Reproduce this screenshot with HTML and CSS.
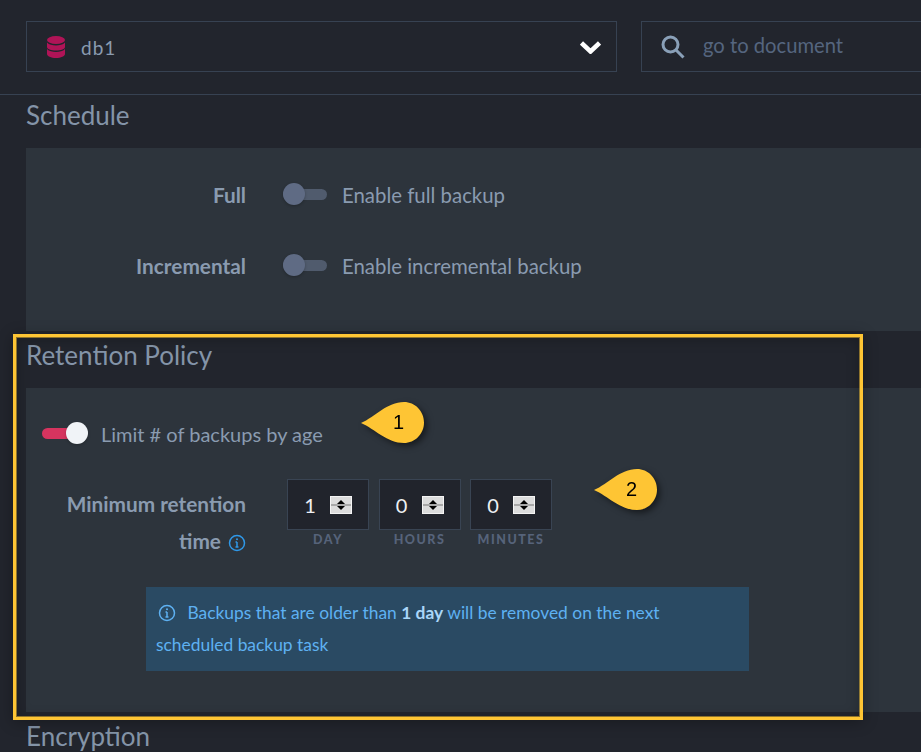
FILE: index.html
```html
<!DOCTYPE html>
<html>
    <head>
        <title>Backup task</title>
        <link rel="stylesheet" href="styles.css">
    </head>
    <body>
        <div class="toolbar">
            <div class="db-select">
                <svg class="db-icon" viewBox="0 0 18 22">
                    <ellipse cx="9" cy="4" rx="9" ry="4" />
                    <path d="M0 6.5C2 8.8 5.5 9.500 9 9.500S16 8.800 18 6.500V11C18 13 14 14.500 9 14.500S0 13 0 11Z" />
                    <path d="M0 13C2 15.300 5.500 16 9 16S16 15.300 18 13V18C18 20.200 14 22 9 22S0 20.200 0 18Z" />
                </svg>
                <span class="db-name">db1</span>
                <svg class="chevron" viewBox="0 0 21 14">
                    <path d="M1.500 3L10.500 11.500L19.500 3" />
                </svg>
            </div>
            <div class="doc-search">
                <svg class="search-icon" viewBox="0 0 24 24">
                    <circle cx="9.500" cy="9.500" r="7.500" />
                    <path d="M15 15L22.500 22.500" />
                </svg>
                <span class="placeholder">go to document</span>
            </div>
        </div>

        <h2 class="section-title first">Schedule</h2>
        <div class="panel schedule">
            <div class="form-row">
                <div class="form-label">Full</div>
                <span class="toggle"><span class="knob"></span></span>
                <span class="toggle-text">Enable full backup</span>
            </div>
            <div class="form-row">
                <div class="form-label">Incremental</div>
                <span class="toggle"><span class="knob"></span></span>
                <span class="toggle-text">Enable incremental backup</span>
            </div>
        </div>

        <h2 class="section-title">Retention Policy</h2>
        <div class="panel retention">
            <div class="limit-row">
                <span class="toggle on"><span class="knob"></span></span>
                <span class="toggle-text">Limit # of backups by age</span>
            </div>
            <div class="time-row">
                <div class="form-label wrap">Minimum retention time
                    <svg class="info-icon" viewBox="0 0 18 18">
                        <circle cx="9" cy="9" r="7.500" />
                        <path d="M9 8V13M7.500 13H10.500M7.500 8H9" />
                        <circle class="dot" cx="9" cy="5.300" r="1" />
                    </svg>
                </div>
                <div class="spinners">
                    <div class="spin-field">
                        <div class="spin-box">
                            <span class="spin-value">1</span>
                            <span class="spin-arrows"><i class="up"></i><i class="down"></i></span>
                        </div>
                        <div class="spin-label">day</div>
                    </div>
                    <div class="spin-field">
                        <div class="spin-box">
                            <span class="spin-value">0</span>
                            <span class="spin-arrows"><i class="up"></i><i class="down"></i></span>
                        </div>
                        <div class="spin-label">hours</div>
                    </div>
                    <div class="spin-field">
                        <div class="spin-box">
                            <span class="spin-value">0</span>
                            <span class="spin-arrows"><i class="up"></i><i class="down"></i></span>
                        </div>
                        <div class="spin-label">minutes</div>
                    </div>
                </div>
            </div>
            <div class="info-box">
                <svg class="info-icon box-icon" viewBox="0 0 18 18">
                    <circle cx="9" cy="9" r="7.500" />
                    <path d="M9 8V13M7.500 13H10.500M7.500 8H9" />
                    <circle class="dot" cx="9" cy="5.300" r="1" />
                </svg>
                Backups that are older than <strong>1 day</strong> will be removed on the next<br>
                scheduled backup task
            </div>
        </div>

        <h2 class="section-title">Encryption</h2>

        <!-- annotations lying over the page -->
        <div class="frame"></div>
        <div class="callout one">
            <svg viewBox="0 0 63 41"><path d="M0 21C14 15 26 0 43 0C54 0 63 9 63 20.500C63 32 54 41 43 41C26 41 14 27 0 21Z" /></svg>
            <span>1</span>
        </div>
        <div class="callout two">
            <svg viewBox="0 0 63 41"><path d="M0 21C14 15 26 0 43 0C54 0 63 9 63 20.500C63 32 54 41 43 41C26 41 14 27 0 21Z" /></svg>
            <span>2</span>
        </div>
    </body>
</html>
```

FILE: styles.css
```css
html, body {
    margin: 0;
    height: 752px;
    overflow: hidden;
}
body {
    background: #22252d;
    color: #8a9bb0;
    font-family: "Lato", "Open Sans", sans-serif;
    position: relative;
}

/* top bar */
.toolbar {
    display: flex;
    gap: 24px;
    padding: 21px 0 22px 26px;
    border-bottom: 1px solid #374252;
    overflow: hidden;
}
.db-select, .doc-search {
    height: 51px;
    box-sizing: border-box;
    border: 1px solid #374252;
    display: flex;
    align-items: center;
    flex: none;
}
.db-select {
    width: 591px;
    padding: 0 15px 0 20px;
}
.db-icon {
    width: 18px;
    height: 22px;
    fill: #b01457;
}
.db-name {
    margin-left: 16px;
    font-size: 19px;
    letter-spacing: 1px;
    flex: 1;
    padding-top: 1px;
}
.chevron {
    width: 21px;
    height: 14px;
    fill: none;
    stroke: #fff;
    stroke-width: 4.500px;
}
.doc-search {
    width: 400px;
    padding-left: 19px;
}
.search-icon {
    width: 24px;
    height: 24px;
    fill: none;
    stroke: #8aa0b8;
    stroke-width: 3px;
}
.placeholder {
    margin-left: 18px;
    padding-bottom: 3px;
    font-size: 20.200px;
    color: #55657f;
}

/* sections */
.section-title {
    margin: 0;
    padding: 6px 0 14px 26px;
    font-size: 26px;
    line-height: 37px;
    height: 37px;
    font-weight: 400;
    color: #8494a8;
}
.section-title.first {
    padding-top: 2px;
    padding-bottom: 14px;
}
.panel {
    background: #2d343c;
    margin-left: 26px;
}
.schedule {
    height: 183px;
    padding-top: 20px;
    box-sizing: border-box;
}
.form-row {
    display: flex;
    align-items: center;
    height: 51px;
    margin-bottom: 20px;
}
.form-label {
    width: 220px;
    flex: none;
    text-align: right;
    font-size: 20.800px;
    font-weight: 700;
    color: #8a9bb0;
    margin-right: 37px;
    padding-top: 2px;
}
.toggle {
    display: inline-block;
    width: 44px;
    height: 22px;
    flex: none;
    position: relative;
}
.toggle::before {
    content: "";
    position: absolute;
    left: 0;
    right: 0;
    top: 6px;
    height: 11px;
    border-radius: 6px;
    background: #505b6d;
}
.knob {
    position: absolute;
    left: 0;
    top: 0;
    width: 22px;
    height: 22px;
    border-radius: 50%;
    background: #5f6b84;
    box-shadow: 0 1px 3px rgba(0, 0, 0, .25);
}
.toggle.on {
    width: 46px;
}
.toggle.on::before {
    background: #d6345f;
    right: 16px;
}
.toggle.on .knob {
    left: 24px;
    background: #f0f3f7;
}
.toggle-text {
    margin-left: 15px;
    font-size: 20.400px;
    color: #8a9bb0;
    padding-top: 3px;
}

/* retention */
.retention {
    height: 324px;
    box-sizing: border-box;
    padding-top: 34px;
}
.limit-row {
    display: flex;
    align-items: center;
    padding-left: 16px;
    height: 22px;
}
.limit-row .toggle-text {
    margin-left: 13px;
    padding-top: 1px;
    font-size: 20px;
}
.time-row {
    display: flex;
    margin-top: 35px;
}
.form-label.wrap {
    box-sizing: border-box;
    padding-left: 30px;
    line-height: 37px;
    padding-top: 6px;
    margin-right: 41px;
}
.info-icon {
    width: 18px;
    height: 18px;
    fill: none;
    stroke: #2f98e8;
    stroke-width: 1.500;
    vertical-align: -3px;
    margin-left: 2px;
}
.info-icon .dot {
    fill: #2f98e8;
    stroke: none;
}
.spinners {
    display: flex;
    gap: 9.500px;
}
.spin-field {
    width: 82px;
    text-align: center;
}
.spin-box {
    height: 51px;
    box-sizing: border-box;
    background: #21242c;
    border: 1px solid #394453;
    display: flex;
    align-items: center;
    padding-left: 13px;
}
.spin-value {
    width: 18px;
    text-align: center;
    font-size: 20px;
    color: #eef0f3;
}
.spin-arrows {
    width: 22px;
    height: 18px;
    margin-left: 11px;
    box-sizing: border-box;
    border: 1px solid #f4f4f4;
    background: #dcdcdc;
    display: flex;
    flex-direction: column;
    justify-content: space-between;
    align-items: center;
    padding: 3px 0;
    position: relative;
}
.spin-arrows::after {
    content: "";
    position: absolute;
    left: 0;
    right: 0;
    top: 7px;
    height: 2px;
    background: #a8a8a8;
}
.spin-arrows i {
    width: 0;
    height: 0;
    border-left: 5px solid transparent;
    border-right: 5px solid transparent;
}
.spin-arrows .up {
    border-bottom: 5px solid #000;
}
.spin-arrows .down {
    border-top: 5px solid #000;
}
.spin-label {
    margin-top: 2px;
    font-size: 12.500px;
    font-weight: 900;
    line-height: 15px;
    letter-spacing: 1.500px;
    text-transform: uppercase;
    color: #56637a;
}
.info-box {
    width: 603px;
    height: 84px;
    box-sizing: border-box;
    margin: 28px 0 0 120px;
    padding: 10px;
    background: #2a4a63;
    color: #5eb1f2;
    font-size: 17.400px;
    line-height: 32px;
}
.info-box strong {
    color: #a9d6f9;
}
.box-icon {
    margin: 0 7px 0 2px;
    stroke: #5eb1f2;
}
.box-icon .dot {
    fill: #5eb1f2;
}

/* annotations */
.frame {
    position: absolute;
    left: 13px;
    top: 334px;
    width: 844px;
    height: 380px;
    border: 3px solid #fec534;
    box-shadow: inset 0 0 0 1px rgba(254, 197, 52, .5), 0 2px 14px rgba(0, 0, 0, .3), inset 0 2px 14px rgba(0, 0, 0, .25);
}
.callout {
    position: absolute;
    width: 63px;
    height: 41px;
    filter: drop-shadow(3px 3px 3px rgba(0, 0, 0, .5));
}
.callout svg {
    display: block;
    width: 63px;
    height: 41px;
    fill: #fec534;
}
.callout span {
    position: absolute;
    left: 17px;
    width: 41px;
    top: 0;
    text-align: center;
    line-height: 41px;
    font-family: "Liberation Sans", sans-serif;
    font-size: 20px;
    color: #000;
}
.callout.one {
    left: 361px;
    top: 402px;
}
.callout.two {
    left: 594px;
    top: 469px;
}
```
